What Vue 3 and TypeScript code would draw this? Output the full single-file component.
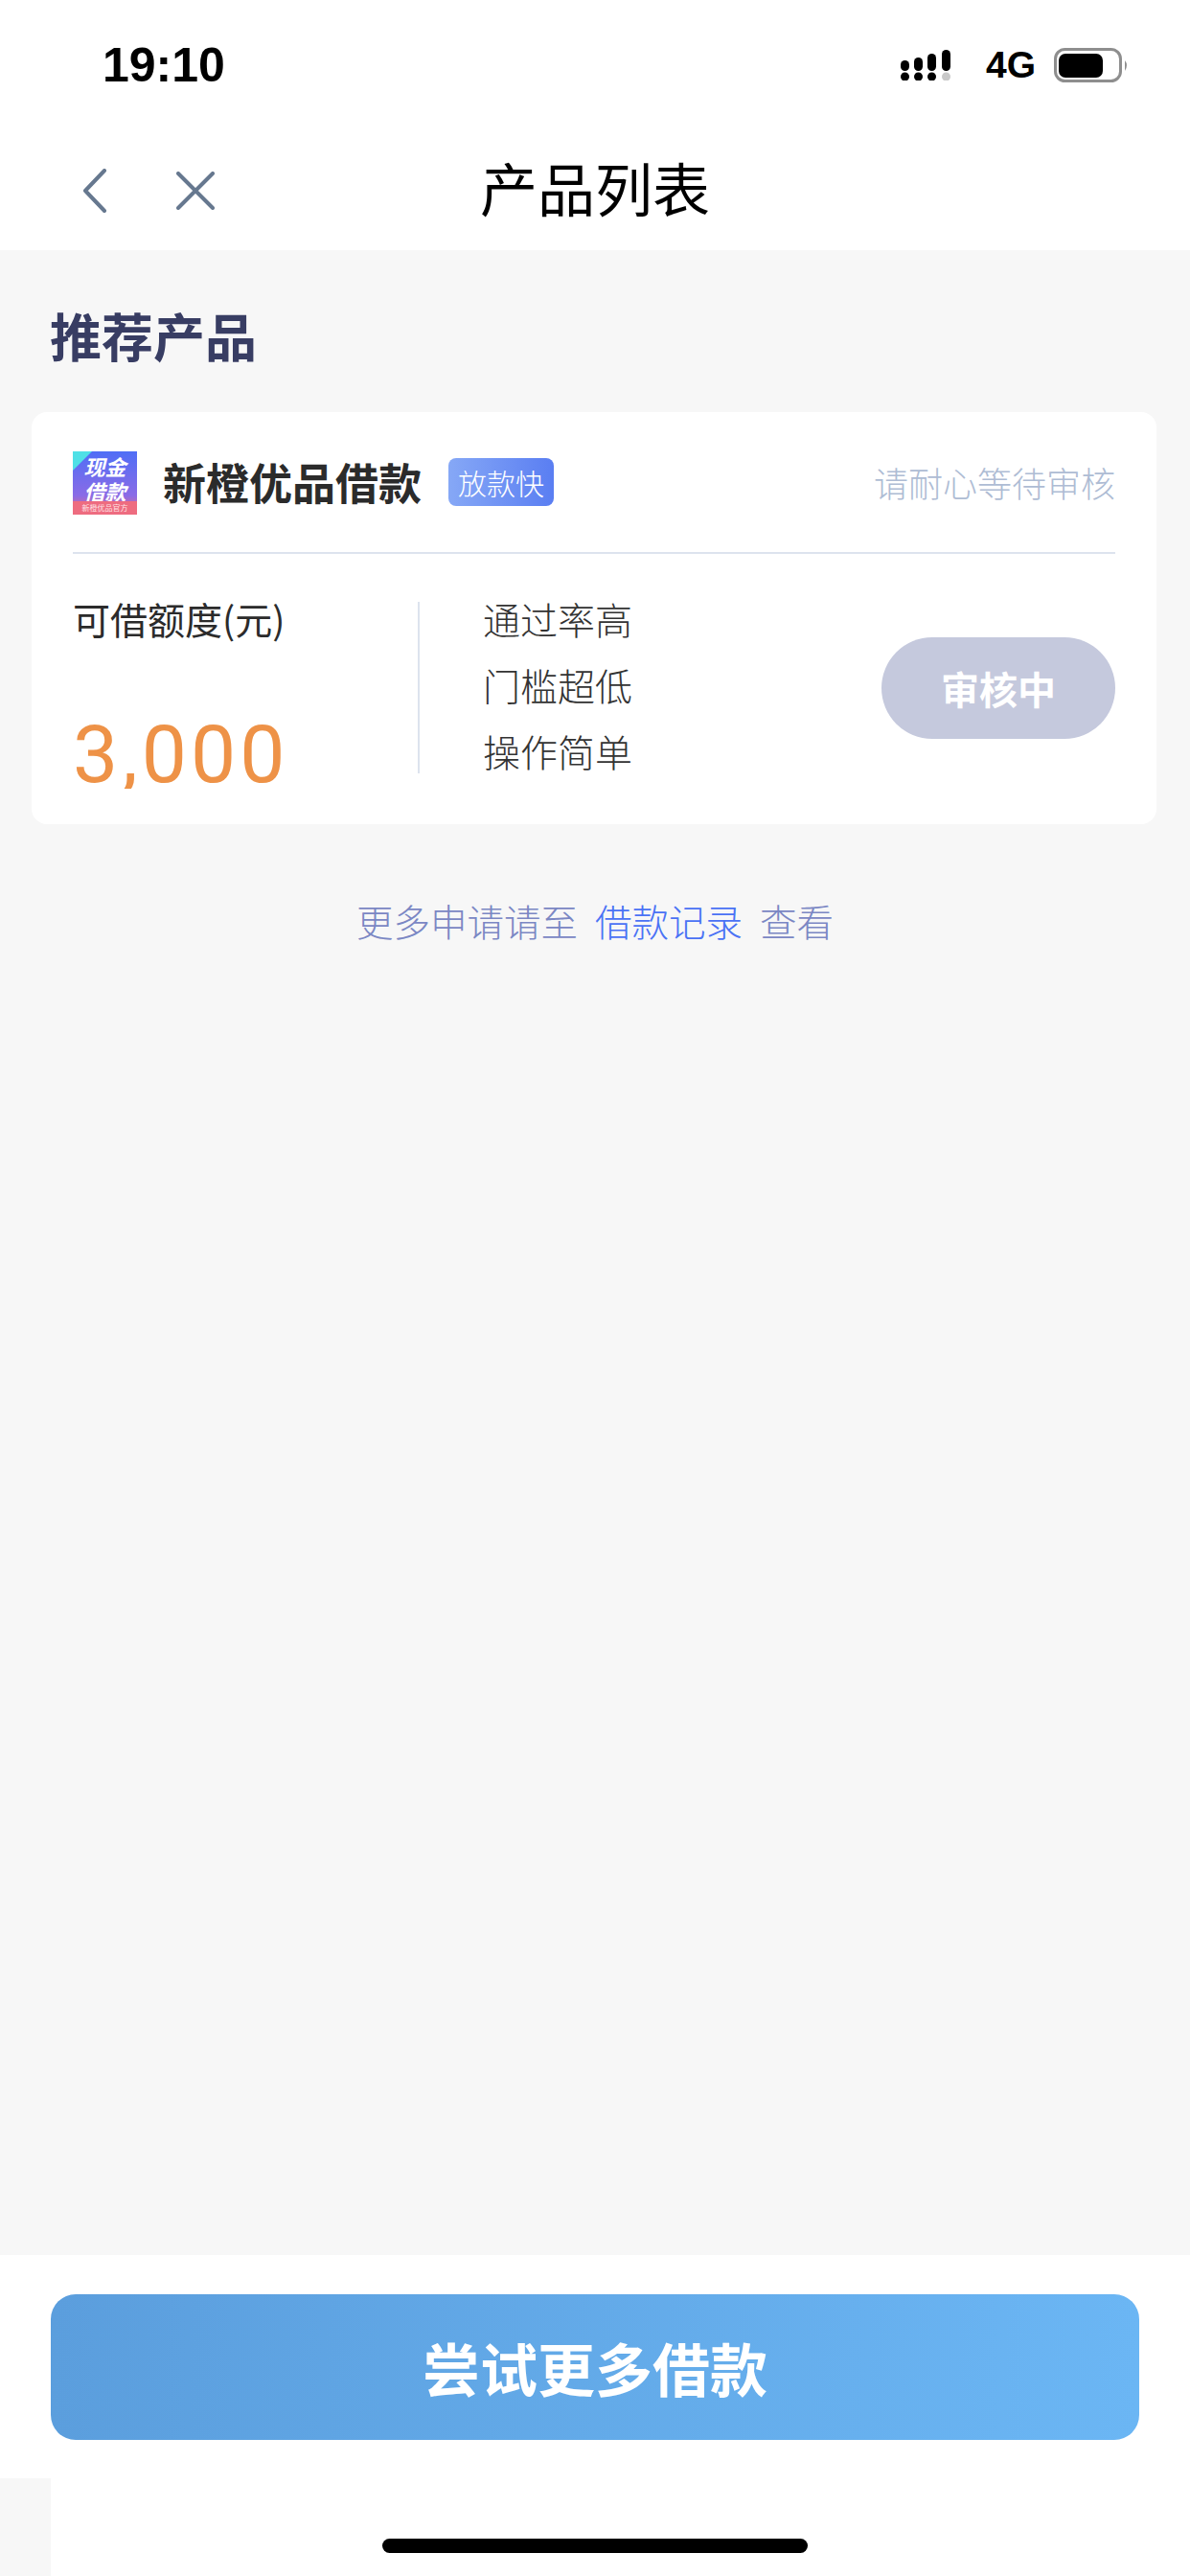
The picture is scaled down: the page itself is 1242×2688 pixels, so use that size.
<script setup lang="ts">
const perks: string[] = ['通过率高', '门槛超低', '操作简单']
</script>

<template>
  <div class="page">
    <div class="status">
      <span class="time">19:10</span>
      <div class="status-right">
        <svg class="signal" width="54" height="32" viewBox="0 0 54 32">
          <rect x="0" y="11" width="9" height="11" rx="4.5" fill="#000" />
          <rect x="14" y="8" width="9" height="14" rx="4.5" fill="#000" />
          <rect x="28" y="4" width="9" height="18" rx="4.5" fill="#000" />
          <rect x="43" y="0" width="9" height="22" rx="4.5" fill="#000" />
          <circle cx="4.5" cy="28" r="4.5" fill="#000" />
          <circle cx="18.5" cy="28" r="4.5" fill="#000" />
          <circle cx="32.5" cy="28" r="4.5" fill="#000" />
          <circle cx="47.5" cy="28" r="4.5" fill="#c9c9c9" />
        </svg>
        <span class="net">4G</span>
        <svg class="battery" width="78" height="36" viewBox="0 0 78 36">
          <rect x="1.5" y="1.5" width="68" height="33" rx="10" fill="none" stroke="#8e8e8e" stroke-width="3" />
          <rect x="5" y="6" width="46" height="25" rx="7" fill="#000" />
          <path d="M74 13 Q78 18 74 24 Z" fill="#8e8e8e" />
        </svg>
      </div>
    </div>

    <div class="nav">
      <div class="nav-left">
        <svg width="26" height="46" viewBox="0 0 26 46">
          <path d="M23 2 L3 23 L23 44" fill="none" stroke="#66788f" stroke-width="4" stroke-linecap="round" stroke-linejoin="round" />
        </svg>
        <svg width="40" height="40" viewBox="0 0 40 40">
          <path d="M2 2 L38 38 M38 2 L2 38" fill="none" stroke="#66788f" stroke-width="4" stroke-linecap="round" />
        </svg>
      </div>
      <div class="nav-title">产品列表</div>
      <div></div>
    </div>

    <main class="main">
      <h2 class="section-title">推荐产品</h2>

      <section class="card">
        <header class="card-head">
          <div class="logo">
            <span class="logo-corner"></span>
            <span class="logo-main">现金<br />借款</span>
            <span class="logo-band">新橙优品官方</span>
          </div>
          <span class="name">新橙优品借款</span>
          <span class="tag">放款快</span>
          <span class="wait">请耐心等待审核</span>
        </header>

        <div class="card-body">
          <div class="quota">
            <span class="quota-label">可借额度(元)</span>
            <span class="quota-value">3,000</span>
          </div>
          <div class="vline"></div>
          <ul class="perks">
            <li v-for="perk in perks" :key="perk">{{ perk }}</li>
          </ul>
          <button class="review" type="button">审核中</button>
        </div>
      </section>

      <p class="more">
        <span>更多申请请至</span>
        <span class="link">借款记录</span>
        <span>查看</span>
      </p>
    </main>

    <footer class="footer">
      <button class="cta" type="button">尝试更多借款</button>
    </footer>
    <div class="home-strip"><span class="home-bar"></span></div>
  </div>
</template>

<style>
html, body { margin: 0; padding: 0; background: #f7f7f7; }
</style>

<style scoped>
.page {
  width: 1242px;
  height: 2688px;
  display: flex;
  flex-direction: column;
  background: #f7f7f7;
  font-family: "Noto Sans CJK SC", "Liberation Sans", sans-serif;
  overflow: hidden;
}
.status {
  height: 136px;
  flex: none;
  background: #fff;
  display: flex;
  align-items: center;
  justify-content: space-between;
  padding: 0 64px 0 107px;
  box-sizing: border-box;
}
.time {
  font: bold 50px/56px "Liberation Sans", sans-serif;
  color: #000;
}
.status-right {
  display: flex;
  align-items: center;
}
.signal { margin-right: 35px; }
.net {
  font: bold 39px/44px "Liberation Sans", sans-serif;
  color: #000;
  margin-right: 19px;
}
.nav {
  height: 125px;
  flex: none;
  background: #fff;
  display: grid;
  grid-template-columns: 1fr auto 1fr;
  align-items: center;
}
.nav-left {
  display: flex;
  align-items: center;
  gap: 72px;
  padding-left: 86px;
}
.nav-title {
  font-size: 60px;
  line-height: 70px;
  color: #000;
  margin-top: -7px;
}
.main {
  flex: 1;
  min-height: 0;
  padding-top: 59px;
}
.section-title {
  margin: 0 0 50px 52px;
  font-size: 54px;
  line-height: 60px;
  font-weight: 700;
  color: #383d63;
}
.card {
  margin: 0 35px 0 33px;
  height: 430px;
  background: #fff;
  border-radius: 16px;
  padding: 0 43px;
  box-sizing: border-box;
}
.card-head {
  height: 148px;
  box-sizing: border-box;
  border-bottom: 2px solid #dde3ee;
  display: flex;
  align-items: center;
}
.logo {
  position: relative;
  width: 67px;
  height: 66px;
  flex: none;
  overflow: hidden;
  background: linear-gradient(180deg, #4f6ef6 0%, #8a6be6 70%, #ef6b80 100%);
  color: #fff;
  text-align: center;
  margin-top: 2px;
}
.logo-corner {
  position: absolute;
  left: 0;
  top: 0;
  width: 0;
  height: 0;
  border-top: 20px solid #4fe0e6;
  border-right: 20px solid transparent;
}
.logo-main {
  display: block;
  font-size: 22px;
  line-height: 26px;
  font-weight: 700;
  font-style: italic;
  padding-top: 2px;
}
.logo-band {
  position: absolute;
  left: 0;
  right: 0;
  bottom: 0;
  height: 14px;
  font-size: 8px;
  line-height: 14px;
  background: #ee6c80;
  color: #ffe3e6;
}
.name {
  margin-left: 27px;
  font-size: 45px;
  line-height: 54px;
  font-weight: 700;
  color: #2b2b2b;
}
.tag {
  margin-left: 28px;
  width: 110px;
  height: 50px;
  border-radius: 8px;
  background: linear-gradient(90deg, #86a8f6, #5a7ef2);
  color: #fff;
  font-size: 30px;
  line-height: 50px;
  text-align: center;
  font-weight: 300;
}
.wait {
  margin-left: auto;
  font-size: 36px;
  line-height: 44px;
  font-weight: 300;
  color: #aebcd4;
}
.card-body {
  display: flex;
  align-items: flex-start;
}
.quota {
  width: 360px;
  height: 198px;
  margin-top: 47px;
  flex: none;
  display: flex;
  flex-direction: column;
  justify-content: space-between;
}
.quota-label {
  font-size: 39px;
  line-height: 40px;
  color: #2b2b2b;
}
.quota-value {
  font-family: Roboto, sans-serif;
  font-size: 84px;
  line-height: 70px;
  height: 70px;
  overflow: hidden;
  letter-spacing: 4px;
  color: #ee9247;
}
.vline {
  width: 2px;
  height: 179px;
  margin-top: 50px;
  flex: none;
  background: #dde3ee;
}
.perks {
  list-style: none;
  margin: 33px 0 0 66px;
  padding: 0;
  font-size: 39px;
  line-height: 69px;
  color: #333;
  font-weight: 300;
}
.review {
  margin: 87px 0 0 auto;
  width: 244px;
  height: 106px;
  border: 0;
  border-radius: 53px;
  background: #c5c9dd;
  color: #fff;
  padding: 0;
  font: 700 40px/106px "Noto Sans CJK SC", sans-serif;
}
.more {
  margin: 80px 0 0;
  display: flex;
  justify-content: center;
  gap: 18px;
  font-size: 38.5px;
  line-height: 40px;
  font-weight: 300;
  color: #7b87c4;
}
.link { color: #4a72f5; }
.footer {
  flex: none;
  height: 233px;
  box-sizing: border-box;
  background: #fff;
  padding: 41px 53px 40px;
}
.cta {
  display: block;
  width: 100%;
  height: 152px;
  border: 0;
  border-radius: 26px;
  background: linear-gradient(90deg, #5b9edd, #6bb6f4);
  color: #fff;
  padding: 0;
  font: 700 60px/152px "Noto Sans CJK SC", sans-serif;
}
.home-strip {
  flex: none;
  height: 102px;
  margin-left: 53px;
  background: #fff;
  box-sizing: border-box;
  padding: 63px 0 0 346px;
}
.home-bar {
  display: block;
  width: 444px;
  height: 15px;
  border-radius: 8px;
  background: #000;
}
</style>
